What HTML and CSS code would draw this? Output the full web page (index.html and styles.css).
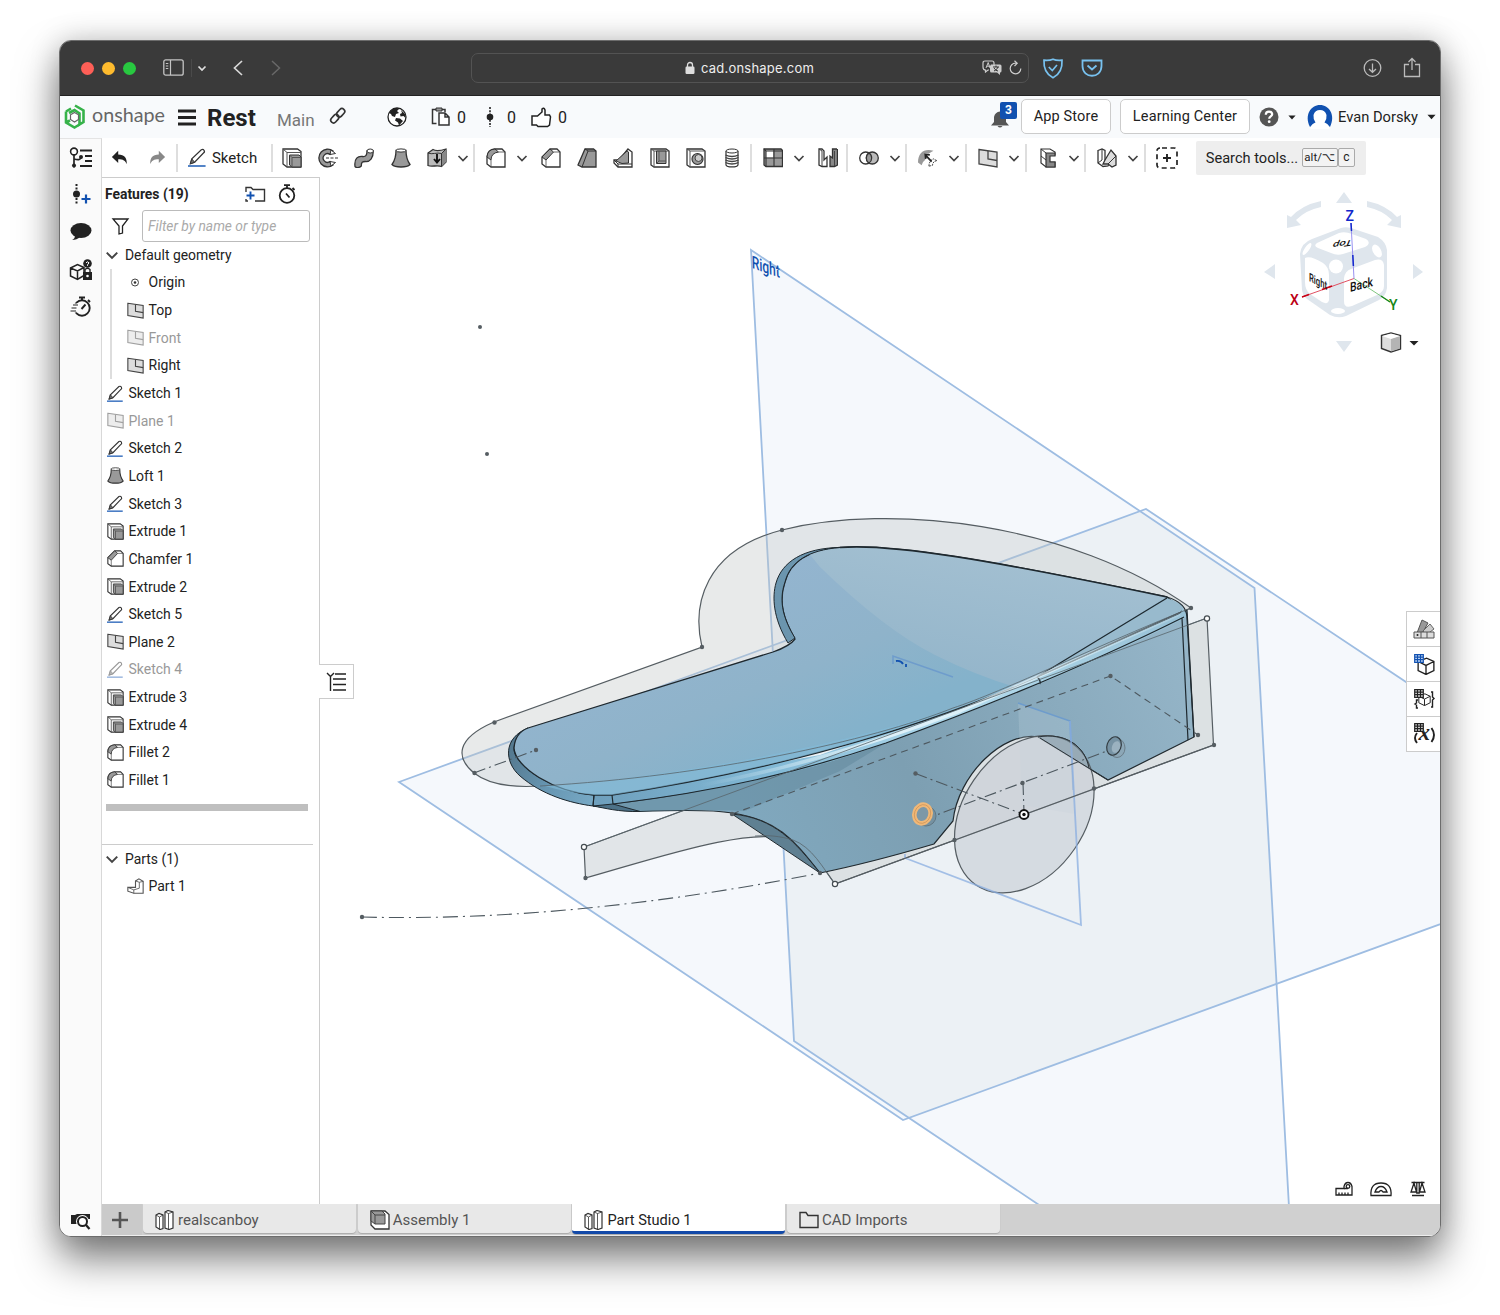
FILE: index.html
```html
<!DOCTYPE html>
<html lang="en">
<head>
<meta charset="utf-8">
<title>Rest | Part Studio 1</title>
<link rel="stylesheet" href="styles.css">
</head>
<body>
<svg class="sprite" aria-hidden="true">
  <symbol id="chev" viewBox="0 0 12 12"><path d="M1.500 4 6 8.500 10.500 4" fill="none" stroke="currentColor" stroke-width="1.700"/></symbol>
  <symbol id="caret" viewBox="0 0 10 6"><path d="M.5.5h9L5 5.500z" fill="currentColor"/></symbol>
  <symbol id="pencil" viewBox="0 0 20 20"><path d="M2.500 16.500 4 11.500 14 1.800q2-.8 3 .8t-1 2.900L7 15z" fill="#fff" stroke="#333" stroke-width="1.300"/><path d="M4 11.500 7 15l-4.500 1.500z" fill="#777" stroke="#333"/><path d="M0 19h18.500" stroke="#1b5bb5" stroke-width="1.500"/></symbol>
  <symbol id="extrude" viewBox="0 0 20 20"><path d="M1 1h14.500L19 3.500V19H5L1 16z" fill="#fff" stroke="#333" stroke-width="1.300"/><path d="M1 1l4 3.500V19M5 4.500h14" fill="none" stroke="#555"/><path d="M7.500 7H17l2 2v10H10l-2.500-2z" fill="#999" stroke="#333"/><path d="M7.500 7 10 9.500V19M10 9.500h9" fill="none" stroke="#555"/></symbol>
  <symbol id="revolve" viewBox="0 0 20 20"><path d="M15 3A8.800 8.800 0 1 0 15 17L12 13.500a4.300 4.300 0 1 1 0-7z" fill="#999" stroke="#333" stroke-width="1.300"/><path d="M12 6.500l1-4.500 4.500 3.500zM12 13.500l1 4.500 4.500-3.500z" fill="#fff" stroke="#333"/><path d="M8 10h12" stroke="#333" stroke-width="1.200" stroke-dasharray="3 1.500"/></symbol>
  <symbol id="sweep" viewBox="0 0 20 20"><path d="M1 18.500C0 10 4 8 8.500 8.500 12 9 13 7 13 3h6.300c0 7-3.300 11-8 10.500-3 0-4 .5-4 4.500-2 2-5 2-6.300.5z" fill="#999" stroke="#333" stroke-width="1.300"/><ellipse cx="16.200" cy="3" rx="3.200" ry="2" fill="#fff" stroke="#333"/></symbol>
  <symbol id="loft" viewBox="0 0 20 20"><path d="M5 2.500C5 8 3.500 13 1 16.500c3 3.300 15 3.300 18 0C16.500 13 15 8 15 2.500z" fill="#999" stroke="#333" stroke-width="1.300"/><ellipse cx="10" cy="2.500" rx="5" ry="1.600" fill="#fff" stroke="#333"/></symbol>
  <symbol id="thicken" viewBox="0 0 20 20"><path d="M1 5 6 1.500c3 2 8 1 13-.5v13l-4.500 4.500c-5-2-9 1-13.500-1z" fill="#bbb" stroke="#333" stroke-width="1.300"/><path d="M14.500 5.500 19 1v13l-4.500 4.500z" fill="#888"/><path d="M1 5c4 2 9-1 13.500.5L19 1M14.500 5.500V18" fill="none" stroke="#333"/><path d="M10 6v8M7 11l3 3.500L13 11" fill="none" stroke="#111" stroke-width="1.900"/></symbol>
  <symbol id="fillet" viewBox="0 0 20 20"><path d="M1 16V9Q1.500 1.500 9 1h7l3 3v15H5z" fill="#fff" stroke="#333" stroke-width="1.300"/><path d="M1 9Q1.500 1.500 9 1l3.500 3Q5 5 5 12z" fill="#999" stroke="#333"/><path d="M5 12v7M12.500 4H19" stroke="#444" stroke-width=".8" fill="none"/></symbol>
  <symbol id="chamfer" viewBox="0 0 20 20"><path d="M1 16V9l8-8h7l3 3v15H5z" fill="#fff" stroke="#333" stroke-width="1.300"/><path d="M1 9l8-8 3.500 3L5 12z" fill="#999" stroke="#333"/><path d="M5 12v7M12.500 4H19" stroke="#444" stroke-width=".8" fill="none"/></symbol>
  <symbol id="draft" viewBox="0 0 20 20"><path d="M8 1h8.500L19 3v16H5l-4-2z" fill="#999" stroke="#333" stroke-width="1.300"/><path d="M8 1l3 2h8M11 3 5 19" fill="none" stroke="#333"/></symbol>
  <symbol id="rib" viewBox="0 0 20 20"><path d="M15 1l4 3v15H5L1 15v-3h5z" fill="#fff" stroke="#333" stroke-width="1.300"/><path d="M3 13 14 3l1.500 1v11L9 15.500z" fill="#999" stroke="#333"/><path d="M1 12l4 4h14M5 16v3" fill="none" stroke="#333"/></symbol>
  <symbol id="shell" viewBox="0 0 20 20"><path d="M1 1h15l3 2v16H4l-3-2z" fill="#fff" stroke="#333" stroke-width="1.300"/><path d="M1 1l3 2h15M4 3v16" fill="none" stroke="#555"/><path d="M6.500 3v12.500h9.500V3z" fill="#999" stroke="#333"/><path d="M9 3v10h7M6.500 15.500 9 13" stroke="#555" fill="none"/></symbol>
  <symbol id="hole" viewBox="0 0 20 20"><path d="M1 1h15l3 2v16H4l-3-2z" fill="#fff" stroke="#333" stroke-width="1.300"/><path d="M1 1l3 2h15M4 3v16" fill="none" stroke="#555"/><circle cx="11.500" cy="11" r="5.500" fill="#999" stroke="#333" stroke-width="1.200"/><circle cx="12.500" cy="10" r="3.500" fill="#ccc" stroke="#444"/></symbol>
  <symbol id="thread" viewBox="0 0 20 20"><path d="M4 3v14c1 2.600 11 2.600 12 0V3" fill="#fff" stroke="#333" stroke-width="1.200"/><ellipse cx="10" cy="3" rx="6" ry="2" fill="#fff" stroke="#333"/><path d="M3.500 7q6.500 3 13 0M3.500 9.500q6.500 3 13 0M3.500 12q6.500 3 13 0M3.500 14.500q6.500 3 13 0" stroke="#444" stroke-width="1.300" fill="none"/></symbol>
  <symbol id="pattern" viewBox="0 0 20 20"><path d="M1 1h17l1.500 1.500v16H3L1 17z" fill="#999" stroke="#333" stroke-width="1.300"/><path d="M3 2.500h7v7H3z" fill="#fff"/><path d="M1 1l2 2h16M3 3v16M11 1v18M1 10h18.500" stroke="#333" fill="none" stroke-width="1.100"/></symbol>
  <symbol id="mirror" viewBox="0 0 20 20"><path d="M1 1h3l2 2v9l3-3v9.500H4L1 17z" fill="#fff" stroke="#333" stroke-width="1.300"/><path d="M1 1l3 2v15.500" stroke="#444" fill="none"/><path d="M19 1h-4.500v9l-2.500-2v10.500h4.500l3-1.500V1" fill="#888" stroke="#333" stroke-width="1.300"/><path d="M16.500 3v15" stroke="#444" fill="none"/></symbol>
  <symbol id="boolean" viewBox="0 0 20 20"><circle cx="6.700" cy="10" r="6" fill="#fff" stroke="#333" stroke-width="1.300"/><circle cx="13.300" cy="10" r="6" fill="#bbb" stroke="#333" stroke-width="1.300"/><path d="M10 5a6 6 0 0 1 0 10 6 6 0 0 1 0-10" fill="#999" stroke="#333" stroke-width="1.200"/></symbol>
  <symbol id="split" viewBox="0 0 22 20"><path d="M0 15C0 4 7-1 17 2l-5 3H8v7q-3 2-4 6z" fill="#999"/><path d="M12 19c0-4 2-7 5-8l4 2c-3 0-5 2-5 5z" fill="#fff" stroke="#333" stroke-dasharray="2 1"/><path d="M15 14 8 6.500M13 6.500l-5-.5.5 5" stroke="#222" stroke-width="1.900" fill="none"/></symbol>
  <symbol id="plane" viewBox="0 0 20 20"><path d="M1 1.500 19 4v15L1 16z" fill="#ddd" stroke="#444" stroke-width="1.300"/><path d="M10 3v8l9 1.500" fill="none" stroke="#444" stroke-width="1.300"/></symbol>
  <symbol id="bracket" viewBox="0 0 20 20"><path d="M3 1h9l5 3v3h-6v7h6v5H8L3 15z" fill="#fff" stroke="#333" stroke-width="1.200"/><path d="M8 5h9v3h-5v6h5v5H8z" fill="#888" stroke="#333" stroke-width="1.200"/><path d="M3 1l5 4M3 8l5 4" stroke="#333"/></symbol>
  <symbol id="sheet" viewBox="0 0 20 20"><path d="M1 2.500 5 1l3 1.500V12h6l-3 6-5 .5L1 15z" fill="#fff" stroke="#333" stroke-width="1.300"/><path d="M8 12 14 2l5 6v9l-4 2-4-3H6l2-4" fill="#ddd" stroke="#333" stroke-width="1.300"/><path d="M5 1v11l-4 3M11 16l8-8" fill="none" stroke="#333"/></symbol>
  <symbol id="undo" viewBox="0 0 20 20"><path d="M8 2v4c7 0 10 4 9.500 11-1.500-4-4-5.500-9.500-5.500v4L1 8.800z" fill="currentColor"/></symbol>
  <symbol id="addtool" viewBox="0 0 22 22"><rect x="1" y="1" width="20" height="20" rx="3" fill="none" stroke="#222" stroke-width="1.700" stroke-dasharray="5 3.500" stroke-dashoffset="-2"/><path d="M11 7v8M7 11h8" stroke="#222" stroke-width="1.900"/></symbol>
  <symbol id="studio" viewBox="0 0 20 20"><path d="M1 5 4 3.500 8 5v13.500L5 19.500 1 17zM10 2l3-1.500L18 2v16l-4 1.500L10 18z" fill="#fff" stroke="#333" stroke-width="1.200"/><path d="M1 5l3.500 2L8 5M4.500 7v12.500M10 2l3.500 1.500L18 2M13.500 3.500v16" stroke="#333" stroke-width=".8" fill="none"/></symbol>
  <symbol id="assembly" viewBox="0 0 20 20"><path d="M1 1h14l4 3.500V19H5L1 15z" fill="#fff" stroke="#333" stroke-width="1.300"/><path d="M1 1h11l3 3v10H5l-4-3z" fill="#999" stroke="#444"/><path d="M1 1l4 4h10M5 5v9" stroke="#444" fill="none"/></symbol>
  <symbol id="folder" viewBox="0 0 20 20"><path d="M1 2.500h6l2 3h10v12H1z" fill="none" stroke="#333" stroke-width="1.400"/></symbol>
  <symbol id="part" viewBox="0 0 20 20"><path d="M10 3.500 14 1l5 3v14H8l-7-2.500V11h9z" fill="#fff" stroke="#555" stroke-width="1.300"/><path d="M10 3.500 14.500 5 19 4M14.500 5v7L8 14l-7-3M8 14v4" fill="none" stroke="#555"/></symbol>
  <symbol id="grid" viewBox="0 0 10 9"><path d="M.7.700h8.600v7.600H.7zM3.500.7v7.600M6.500.7v7.600M.7 3.200h8.600M.7 5.700h8.600" fill="none" stroke="currentColor" stroke-width="1.200"/></symbol>
  <symbol id="cube" viewBox="0 0 16 16"><path d="M1 4l7.500-3L15 4v8l-7 3.500L1 12zM1 4l7 3.500L15 4M8 7.500v8" fill="none" stroke="#222" stroke-width="1.200"/></symbol>
</svg>

<div class="window">
  <div class="titlebar">
    <div class="lights"><i class="red"></i><i class="yellow"></i><i class="green"></i></div>
    <svg class="t-side" width="21" height="17"><rect x=".8" y=".8" width="19.400" height="15.400" rx="2" fill="none" stroke="#c4c4c4" stroke-width="1.300"/><path d="M7.500 1v15M2.800 4.500h2.500M2.800 7h2.500M2.800 9.500h2.500" stroke="#c4c4c4" stroke-width="1.200"/></svg>
    <span class="t-div"></span>
    <svg class="t-chev" width="10" height="7"><path d="M1.500 1.500 5 5l3.500-3.500" fill="none" stroke="#e0e0e0" stroke-width="1.700"/></svg>
    <svg class="t-back" width="10" height="16"><path d="M9 1 1.500 8 9 15" fill="none" stroke="#d8d8d8" stroke-width="1.700"/></svg>
    <svg class="t-fwd" width="10" height="16"><path d="M1 1l7.500 7L1 15" fill="none" stroke="#686868" stroke-width="1.500"/></svg>
    <div class="url">
      <svg width="10" height="14"><rect x=".5" y="5.500" width="9" height="7.500" rx="1.200" fill="#ddd"/><path d="M2.500 6V4a2.500 2.500 0 0 1 5 0v2" fill="none" stroke="#ddd" stroke-width="1.300"/></svg>
      <span>cad.onshape.com</span>
      <div class="url-end">
        <svg width="20" height="16"><path d="M3 1h7q2 0 2 2v4M7 10H6l-2.500 2V10Q1 10 1 7V3q0-2 2-2" fill="none" stroke="#ccc" stroke-width="1.200"/><path d="M4 8l2.200-5.500L8 8M4.800 6.200h3" stroke="#ccc" fill="none"/><path d="M9 4.500h9q1.500 0 1.500 1.500v5q0 1.500-1.500 1.500V15l-3-2.500H9.500Q8 12.500 8 11V6z" fill="#ccc"/><path d="M11 7h6M14 5.500V7M12 11q3-1 4-4M12 8q2 3 4 3" stroke="#333" fill="none"/></svg>
        <svg width="13" height="16"><path d="M11.800 8.500a5.300 5.300 0 1 1-5.300-5.300H8M5.500.7 8.200 3.300 5.500 6" fill="none" stroke="#ccc" stroke-width="1.200"/></svg>
      </div>
    </div>
    <svg class="t-shield" width="22" height="21"><path d="M11 1.200c3 1.300 6 1.300 9 1 .5 8-2 14-9 17.500C4 16.200 1.500 10.200 2 2.200c3 .3 6 .3 9-1z" fill="none" stroke="#78c1ee" stroke-width="1.700"/><path d="M6.800 9l3.500 3.500L15 7" fill="none" stroke="#78c1ee" stroke-width="1.700"/></svg>
    <svg class="t-pocket" width="22" height="18"><path d="M1.500 1.500h19V7c0 13-19 13-19 0z" fill="none" stroke="#78c1ee" stroke-width="1.800"/><path d="M6.500 6.500l4.500 4 4.500-4" fill="none" stroke="#78c1ee" stroke-width="1.800"/></svg>
    <span class="grow"></span>
    <svg class="t-down" width="19" height="19"><circle cx="9.500" cy="9" r="8.300" fill="none" stroke="#bbb" stroke-width="1.300"/><path d="M9.500 4.500V13M6 10l3.500 3.300L13 10" fill="none" stroke="#bbb" stroke-width="1.300"/></svg>
    <svg class="t-share" width="18" height="21"><path d="M6 6.500H1.500v12h15v-12H12M9 12V.5M5.500 4 9 .5 12.500 4" fill="none" stroke="#bbb" stroke-width="1.300"/></svg>
  </div>

  <header class="header">
    <svg class="logo" width="102" height="26" viewBox="0 0 102 26"><path d="M11 1.500 19.500 6.500V18l-4 2.500V9.500L10.500 6 5 9" fill="none" stroke="#36b24a" stroke-width="2.600"/><path d="M2 7.500v11l8.500 5 5-3M2 7.500 7 4.500M2 18.500l4-2" fill="none" stroke="#36b24a" stroke-width="2.600"/><path d="M10.500 8.500l4 2.300v4.700l-4 2.500-4-2.500v-4.700z" fill="#fff" stroke="#666" stroke-width="1.200"/><text x="28" y="17.500" font-family="Lato" font-weight="400" font-size="19" fill="#666" textLength="73" lengthAdjust="spacingAndGlyphs">onshape</text></svg>
    <svg class="burger" width="18" height="17"><path d="M0 2h18M0 8.500h18M0 15h18" stroke="#222" stroke-width="2.800"/></svg>
    <span class="doc">Rest</span><span class="branch">Main</span>
    <svg class="link" width="18" height="18"><g fill="none" stroke="#333" stroke-width="1.600"><rect x="-4.500" y="-2.800" width="9.500" height="5.600" rx="2.800" transform="translate(11.500 6) rotate(-48)"/><rect x="-5" y="-2.800" width="9.500" height="5.600" rx="2.800" transform="translate(6 11.500) rotate(-48)"/></g></svg>
    <svg class="globe" width="20" height="20"><circle cx="10" cy="10" r="9" fill="#fff" stroke="#222" stroke-width="1.300"/><path d="M2 6q3-5 8-5l2 1-2 2 2 2-3 1-1 3-3-1-1-2zM14 3l4 4 .5 4-2-2-3 .5L13 7l2-1zM9 11l4 .5 3 2.500-4 4.500-1-3-3-2z" fill="#222"/></svg>
    <svg class="copy" width="20" height="20"><path d="M5.500 16.500h-4v-14h4M11 2.500h3V5" fill="none" stroke="#333" stroke-width="1.500"/><path d="M5 1h6v3H5z" fill="#999" stroke="#333"/><path d="M8 6h6l4 4v8H8zM14 6v4h4" fill="#fff" stroke="#333" stroke-width="1.500"/></svg><b class="n n1">0</b>
    <svg class="ver" width="8" height="20"><path d="M4 0v20" stroke="#222" stroke-width="1.600" stroke-dasharray="2 1.200"/><circle cx="4" cy="10" r="3.300" fill="#222"/></svg><b class="n n2">0</b>
    <svg class="thumb" width="20" height="21"><path d="M1 9h5.500L11 5V2q2-2 3 1v5h4.500l1 2-1 8-2 1.500H7L5.500 18H1z" fill="#fff" stroke="#222" stroke-width="1.500"/></svg><b class="n n3">0</b>
    <span class="grow"></span>
    <div class="bell"><svg width="20" height="18"><path d="M1 15.500 4 12V7q1-5 6-5.500 5 .5 6 5.500v5l3 3.500zM7.500 16h5q-2.500 3-5 0z" fill="#555"/></svg><em>3</em></div>
    <span class="btn app">App Store</span><span class="btn learn">Learning Center</span>
    <svg class="help" width="20" height="20"><circle cx="10" cy="10" r="9.500" fill="#555"/><path d="M6.800 7.800q0-3.200 3.200-3.200t3.200 2.700c0 2.200-3 2.200-3 4.500" fill="none" stroke="#fff" stroke-width="2.200"/><circle cx="10.200" cy="14.700" r="1.400" fill="#fff"/></svg>
    <svg class="c1" width="8" height="5"><use href="#caret"/></svg>
    <svg class="avatar" width="26" height="25"><path d="M3 22C-3 10 4 0 13 0s16 10 10 22l-3-3H6z" fill="#1151b0"/><path d="M8.500 17.500Q4 19 3.500 24h19q-.5-5-5-6.500Q20 14 19.500 10 18 5 13 5t-6.500 5Q6 14 8.500 17.500z" fill="#fff"/></svg>
    <span class="user">Evan Dorsky</span>
    <svg class="c2" width="9" height="6"><use href="#caret"/></svg>
  </header>

  <div class="main">
    <nav class="rail">
      <svg width="24" height="22"><path d="M5 7.500v13M5 12q7 2 7-2" fill="none" stroke="#222" stroke-width="1.700"/><circle cx="5" cy="4.500" r="3.400" fill="#fff" stroke="#222" stroke-width="1.600"/><circle cx="5" cy="18.500" r="2" fill="#222"/><circle cx="12" cy="10" r="2" fill="#222"/><path d="M11 3.500h12M16 9h7M16 14h7M11 19h12" stroke="#222" stroke-width="2"/></svg>
      <svg width="24" height="22"><path d="M7.500 0v21" stroke="#222" stroke-width="2" stroke-dasharray="2 1.500"/><circle cx="7.500" cy="10" r="3.500" fill="#222"/><path d="M17 10.500v9M12.500 15h9" stroke="#1151b0" stroke-width="2.200"/></svg>
      <svg width="24" height="22"><ellipse cx="12" cy="9.500" rx="10.500" ry="7.500" fill="#222"/><path d="M6 14.500q0 3-3 4.500 5 0 8-3z" fill="#222"/></svg>
      <svg width="24" height="22"><path d="M1.500 9l7-3.500L15 8.500v8l-6.500 4-7-3.500zM1.500 9l7 3 6.500-3.500M8.500 12v8" fill="none" stroke="#222" stroke-width="1.500"/><circle cx="18.500" cy="4.500" r="4.300" fill="#222"/><path d="M17 3.800q1.500-2 3 0l-1.500 2v1" stroke="#fff" fill="none"/><path d="M14 13h9v8h-9z" fill="#222"/><path d="M16 13v-2.500q2.500-2.500 5 0V13" stroke="#222" stroke-width="1.400" fill="none"/><circle cx="18.500" cy="17" r="1.300" fill="#fff"/></svg>
      <svg width="24" height="22"><circle cx="13" cy="12" r="7.700" fill="none" stroke="#222" stroke-width="1.900"/><path d="M10 1.500h6M13 2v2.500M19 4l2 2M12.500 13l4-4.500" stroke="#222" stroke-width="1.900"/><path d="M4 9h6M2.500 12h6M1.500 15h6" stroke="#fff" stroke-width="3"/><path d="M4 9h5M2.500 12h5M1.500 15h5.500" stroke="#222" stroke-width="1.200"/></svg>
      <span class="grow"></span>
      <svg class="rail-find" width="22" height="20"><path d="M1 4h4l2-1h13v5H7v5H1z" fill="#222"/><circle cx="12.500" cy="10.500" r="6.500" fill="#fff"/><circle cx="12.500" cy="10.500" r="4.500" fill="#fff" stroke="#222" stroke-width="2"/><path d="M16 14l3.500 4" stroke="#222" stroke-width="2.300"/></svg>
    </nav>

    <div class="content">
      <div class="toolbar">
        <svg class="undo" width="18" height="18"><use href="#undo"/></svg>
        <svg class="redo" width="18" height="18"><use href="#undo"/></svg>
        <i class="sep first"></i>
        <svg class="pen" width="19" height="19"><use href="#pencil"/></svg><span class="sketch">Sketch</span>
        <i class="sep second"></i>
        <span class="tool"><svg><use href="#extrude"/></svg></span><span class="tool"><svg><use href="#revolve"/></svg></span><span class="tool"><svg><use href="#sweep"/></svg></span><span class="tool"><svg><use href="#loft"/></svg></span><span class="tool"><svg><use href="#thicken"/></svg></span><span class="more"><svg><use href="#chev"/></svg></span>
        <i class="sep"></i>
        <span class="tool"><svg><use href="#fillet"/></svg></span><span class="more"><svg><use href="#chev"/></svg></span><span class="tool"><svg><use href="#chamfer"/></svg></span><span class="tool"><svg><use href="#draft"/></svg></span><span class="tool"><svg><use href="#rib"/></svg></span><span class="tool"><svg><use href="#shell"/></svg></span><span class="tool"><svg><use href="#hole"/></svg></span><span class="tool"><svg><use href="#thread"/></svg></span>
        <i class="sep"></i>
        <span class="tool"><svg><use href="#pattern"/></svg></span><span class="more"><svg><use href="#chev"/></svg></span><span class="tool"><svg><use href="#mirror"/></svg></span>
        <i class="sep"></i>
        <span class="tool"><svg><use href="#boolean"/></svg></span><span class="more"><svg><use href="#chev"/></svg></span>
        <i class="sep"></i>
        <span class="tool"><svg><use href="#split"/></svg></span><span class="more"><svg><use href="#chev"/></svg></span>
        <i class="sep"></i>
        <span class="tool"><svg><use href="#plane"/></svg></span><span class="more"><svg><use href="#chev"/></svg></span>
        <i class="sep"></i>
        <span class="tool"><svg><use href="#bracket"/></svg></span><span class="more"><svg><use href="#chev"/></svg></span>
        <i class="sep"></i>
        <span class="tool"><svg><use href="#sheet"/></svg></span><span class="more"><svg><use href="#chev"/></svg></span>
        <i class="sep"></i>
        <span class="tool wide"><svg><use href="#addtool"/></svg></span>
        <div class="search"><span>Search tools...</span><kbd class="k1">alt/⌥</kbd><kbd class="k2">c</kbd></div>
      </div>

      <div class="work">
        <aside class="panel">
          <div class="panel-head"><strong>Features (19)</strong>
            <svg class="newf" width="21" height="17"><path d="M1 6V1.500h5l2 2h11.500V15H10M1 13v2h2" fill="none" stroke="#333" stroke-width="1.400"/><path d="M5.500 5.500v8M1.500 9.500h8" stroke="#1151b0" stroke-width="1.900"/></svg>
            <svg class="watch" width="18" height="20"><circle cx="9" cy="11.500" r="7.300" fill="none" stroke="#222" stroke-width="1.800"/><path d="M6 1.200h6M9 1.500V4M14.500 4l2 2M8 9.500l3.500 4" stroke="#222" stroke-width="1.800"/></svg>
          </div>
          <div class="filter"><svg width="17" height="17"><path d="M1 2h15l-5.500 7v7L7 17V9z" fill="none" stroke="#222" stroke-width="1.300"/></svg><div class="field">Filter by name or type</div></div>
          <div class="tree">
            <div class="row group"><svg class="tw"><use href="#chev"/></svg>Default geometry</div>
            <div class="nest">
              <div class="row"><svg class="ic"><circle cx="8" cy="8.500" r="3.500" fill="none" stroke="#444"/><circle cx="8" cy="8.500" r="1.300" fill="#333"/></svg>Origin</div>
              <div class="row"><svg class="ic"><use href="#plane"/></svg>Top</div>
              <div class="row off"><svg class="ic"><use href="#plane"/></svg>Front</div>
              <div class="row"><svg class="ic"><use href="#plane"/></svg>Right</div>
            </div>
            <div class="row"><svg class="ic"><use href="#pencil"/></svg>Sketch 1</div>
            <div class="row off"><svg class="ic"><use href="#plane"/></svg>Plane 1</div>
            <div class="row"><svg class="ic"><use href="#pencil"/></svg>Sketch 2</div>
            <div class="row"><svg class="ic"><use href="#loft"/></svg>Loft 1</div>
            <div class="row"><svg class="ic"><use href="#pencil"/></svg>Sketch 3</div>
            <div class="row"><svg class="ic"><use href="#extrude"/></svg>Extrude 1</div>
            <div class="row"><svg class="ic"><use href="#chamfer"/></svg>Chamfer 1</div>
            <div class="row"><svg class="ic"><use href="#extrude"/></svg>Extrude 2</div>
            <div class="row"><svg class="ic"><use href="#pencil"/></svg>Sketch 5</div>
            <div class="row"><svg class="ic"><use href="#plane"/></svg>Plane 2</div>
            <div class="row off"><svg class="ic"><use href="#pencil"/></svg>Sketch 4</div>
            <div class="row"><svg class="ic"><use href="#extrude"/></svg>Extrude 3</div>
            <div class="row"><svg class="ic"><use href="#extrude"/></svg>Extrude 4</div>
            <div class="row"><svg class="ic"><use href="#fillet"/></svg>Fillet 2</div>
            <div class="row"><svg class="ic"><use href="#fillet"/></svg>Fillet 1</div>
          </div>
          <div class="rollback"></div>
          <div class="parts">
            <div class="row group"><svg class="tw"><use href="#chev"/></svg>Parts (1)</div>
            <div class="row sub"><svg class="ic"><use href="#part"/></svg>Part 1</div>
          </div>
        </aside>

        <div class="canvas">
          <svg class="scene" viewBox="320 178 1120 1026" width="1120" height="1026">
            <defs>
              <linearGradient id="gTop" gradientUnits="userSpaceOnUse" x1="620" y1="620" x2="700" y2="800"><stop offset="0" stop-color="#94b5d0"/><stop offset=".6" stop-color="#8fb3ca"/><stop offset="1" stop-color="#84b2cb"/></linearGradient>
              <linearGradient id="gWing" gradientUnits="userSpaceOnUse" x1="950" y1="550" x2="920" y2="720"><stop offset="0" stop-color="#a2bfd1"/><stop offset="1" stop-color="#8fb2c8"/></linearGradient>
              <linearGradient id="gSide" gradientUnits="userSpaceOnUse" x1="760" y1="850" x2="1190" y2="650"><stop offset="0" stop-color="#80a8be"/><stop offset=".35" stop-color="#7d9fb2"/><stop offset="1" stop-color="#95b5c8"/></linearGradient>
              <linearGradient id="gRim" gradientUnits="userSpaceOnUse" x1="600" y1="0" x2="1180" y2="0"><stop offset="0" stop-color="#6fa0bd"/><stop offset=".3" stop-color="#82b9d6"/><stop offset=".62" stop-color="#b4dcee"/><stop offset="1" stop-color="#98c1d6"/></linearGradient>
              <linearGradient id="gShine" gradientUnits="userSpaceOnUse" x1="700" y1="0" x2="1180" y2="0"><stop offset="0" stop-color="#e6f5fb" stop-opacity="0"/><stop offset=".4" stop-color="#e6f5fb" stop-opacity=".9"/><stop offset=".7" stop-color="#e6f5fb" stop-opacity=".7"/><stop offset="1" stop-color="#e6f5fb" stop-opacity=".2"/></linearGradient>
              <linearGradient id="gEdge" gradientUnits="userSpaceOnUse" x1="508" y1="750" x2="600" y2="800"><stop offset="0" stop-color="#54788e"/><stop offset=".5" stop-color="#6796b2"/><stop offset="1" stop-color="#79abc7"/></linearGradient>
              <clipPath id="rightPlane"><path d="M751 250 1254.500 588 1290 1225H1069L794 1041z"/></clipPath>
              <clipPath id="deck"><path d="M528 728 773 652Q790 646 795 639C784 620 778 602 785 582 790 562 808 550 840 547.500 890 543 990 560 1167 597L1037 677C900 738 740 776 612 795z"/></clipPath>
            </defs>
            <path d="M751 250 1254.500 588 1290 1225H1069L794 1041zM399 782 1146 509 1460 718V917L903 1120z" fill="#f5f8fc"/>
            <path d="M399 782 1146 509 1460 718V917L903 1120z" fill="#ecf1f5" clip-path="url(#rightPlane)"/>
            <g fill="none" stroke="#9ebde2" stroke-width="1.800">
              <path d="M751 250 1254.500 588 1290 1225H1069L794 1041z"/>
              <path d="M399 782 1146 509 1460 718V917L903 1120z"/>
            </g>
            <g fill="#bfc5c6" fill-opacity=".36" stroke="#555d62" stroke-width="1.200">
              <path d="M474 773C456 758 455 739 494 722L702 647C692 605 704 550 782 530 890 503 1070 522 1191 608L1037 677C900 740 700 775 540 786 510 788 488 784 474 773z"/>
              <path d="M584 847 1207 618 1213.500 745 835 884C823 868 812 847 793 840 750 826 660 857 585.500 878z"/>
            </g>
            <path d="M593 806 640 811.500C680 810 715 810 732 813 780 820 795 842 820 873 860 865 900 854 934 844L953 821C958 775 1003 731 1038 737L1108 780 1188 740 1194 737 1187 610C1100 655 1000 702 886 742 790 776 680 797 593 806z" fill="url(#gSide)" stroke="#20292e" stroke-width="1.200"/>
            <path d="M613 804C720 791 800 772 886 743L840 771 745 811C720 809 680 811 640 811.500z" fill="#547a90" fill-opacity=".35"/>
            <path d="M732 814C775 818 795 842 820 873z" fill="#5f8092" stroke="#222b30" stroke-width="1"/>
            <path d="M1038 737C1065 732 1085 746 1089 768z" fill="#708b9b" stroke="#333"/>
            <path d="M528 728C503 738 504 762 520 776 542 795 570 803 593 806L615 809 640 812 613 804C760 786 840 760 886 743 1000 702 1110 656 1187 617L1182 605 1167 597 1036 677 820 755 600 795 524 769z" fill="url(#gRim)"/>
            <path d="M528 728C503 738 504 762 520 776 542 795 570 803 593 806L594 795C550 791 515 765 514 750 514 740 519 733 528 728z" fill="url(#gEdge)" stroke="#1e282e"/>
            <path d="M593 806 613 804 640 811.500C618 812 605 808 593 806z" fill="#4d7288" stroke="#1e282e"/>
            <path d="M528 728 773 652Q790 646 795 639C784 620 778 602 785 582 790 562 808 550 840 547.500 890 543 990 560 1167 597L1180 608Q1183 611 1178 614L1037 677C900 738 740 776 612 795H594C553 792 515 767 514 748Q515 733 528 728z" fill="url(#gTop)" stroke="#1e282e" stroke-width="1.300"/>
            <path d="M790 530 820 567Q885 630 935 655 975 675 1015 687L1045 676 1175 600V530z" fill="url(#gWing)" clip-path="url(#deck)"/>
            <path d="M1037 677 1167 598 1181 604Q1184 609 1180 613z" fill="#98bacd"/>
            <path d="M840 547.500C890 543 990 560 1167 597" fill="none" stroke="#1e282e" stroke-width="1.700"/>
            <path d="M788 643C773 618 772 597 776 583 782 562 803 548 840 547.500 808 550 790 562 785 582 778 602 784 620 795 638z" fill="#6b95ae" stroke="#1e282e"/>
            <path d="M545 786C690 776 860 740 953 708L937 715C850 747 740 775 612 795H594Q565 792 545 786z" fill="#82bbd8" fill-opacity=".6"/>
            <path d="M613 804C720 791 800 772 886 743 990 705 1090 664 1184 617M594 795 593 806M612 795 613 804M1037 677 1167 598M1037 677 1181 612M1037 677Q1041 680 1040 684M1167 597Q1187 603 1187 618M1182 618 1188 740M1187 618 1194 737" fill="none" stroke="#1e282e" stroke-width="1.200"/>
            <path d="M620 799C730 783 830 760 960 711L1180 614" fill="none" stroke="url(#gShine)" stroke-width="3.500"/>
            <path d="M540 786C710 776 870 741 953 708 1000 693 1110 640 1191 608M584 847 1207 618M835 884C823 868 812 847 793 840 780 836 768 835 755 836" fill="none" stroke="#59656c" stroke-opacity=".8"/>
            <path d="M1018 703 1070 721 1075 814 1022 805z" fill="#bed3df" fill-opacity=".25"/><path d="M1018 703 1070 721 1073 790M893 664V656L953 677" fill="none" stroke="#6e9ccc" stroke-width="1.500"/>
            <path d="M896 661q5-1 7 3M906 664v3" stroke="#1151b0" stroke-width="1.800" fill="none"/>
            <ellipse cx="1024.300" cy="814.300" rx="85.600" ry="61" transform="rotate(124.400 1024.300 814.300)" fill="#c9d0d7" fill-opacity=".67" stroke="#555d62" stroke-width="1.200"/>
            <path d="M1040 738 1108 780M1038 737C1065 732 1085 746 1089 768" stroke="#293238" fill="#7994a3" fill-opacity=".4"/>
            <path d="M1070 721 1081 925 905 858V854" fill="none" stroke="#89ade0" stroke-width="1.800" stroke-opacity=".75"/>
            <path d="M835 884 1213.500 745" stroke="#555d62" stroke-width="1.200"/>
            <g fill="none" stroke="#4d585f" stroke-width="1.100">
              <path d="M732 814 1110.500 676 1198 735" stroke-dasharray="7 5"/>
              <path d="M362 917C510 921 670 903 820 873" stroke-dasharray="15 5 2 5"/>
              <path d="M474 773 536 750M915.500 773.500 1024 814.500M923 820 1115 748M1023 783 1024 812" stroke-dasharray="12 4 2 4"/>
            </g>
            <ellipse cx="1117" cy="748" rx="8" ry="9.500" fill="#8ca7b7" stroke="#6b7e89"/><ellipse cx="1114" cy="746" rx="7" ry="9.500" transform="rotate(20 1114 746)" fill="#7793a4" stroke="#333c41" stroke-width="1.200"/><ellipse cx="1116" cy="747" rx="4" ry="6" transform="rotate(20 1116 747)" fill="#9bb2c0"/>
            <ellipse cx="926" cy="816" rx="10" ry="10" fill="#7592a2" stroke="#627783"/><ellipse cx="922.500" cy="814" rx="8" ry="9.500" transform="rotate(20 922.500 814)" fill="#7d98a7" stroke="#f0b878" stroke-width="4.600"/><ellipse cx="922.500" cy="814" rx="8" ry="9.500" transform="rotate(20 922.500 814)" fill="none" stroke="#c78d50" stroke-width=".6"/>
            <g fill="#555d62"><circle cx="480" cy="327" r="2"/><circle cx="487" cy="454" r="2"/><circle cx="494.500" cy="722.500" r="2.200"/><circle cx="474.500" cy="773" r="2.200"/><circle cx="536" cy="750" r="2.200"/><circle cx="702" cy="647" r="2.200"/><circle cx="782" cy="530" r="2.200"/><circle cx="1191" cy="608" r="2.200"/><circle cx="585.500" cy="878" r="2.200"/><circle cx="362" cy="917" r="2.200"/><circle cx="820" cy="873" r="2.200"/><circle cx="915.500" cy="773.500" r="2.200"/><circle cx="1022.500" cy="783" r="2.200"/><circle cx="1110.500" cy="676" r="2.200"/><circle cx="1198" cy="735" r="2.200"/><circle cx="1214" cy="745" r="2.200"/><circle cx="1094" cy="788.500" r="2.200"/><circle cx="954.500" cy="840" r="2.200"/><circle cx="732" cy="814" r="2.200"/></g>
            <g fill="#fff" stroke="#444c51" stroke-width="1.200"><circle cx="584" cy="847" r="2.600"/><circle cx="835" cy="884" r="2.600"/><circle cx="1207" cy="618.500" r="2.600"/></g>
            <circle cx="1024" cy="814.500" r="4.500" fill="#fff" stroke="#111" stroke-width="1.900"/><circle cx="1024" cy="814.500" r="1.700" fill="#111"/>
            <text transform="matrix(.82 .29 .03 1.100 752 268)" font-family="Roboto" font-size="16" font-weight="500" fill="#1151b0" textLength="34" lengthAdjust="spacingAndGlyphs">Right</text>

            <g fill="#dfe6ed">
              <path d="M1336 203h16l-8-11zM1336 341h16l-8 11zM1264 272l11-8v15zM1423 272l-10-8v15zM1287 228v-13l4 2q11-12 30-16v6q-15 3-25 13l5 5zM1401 228v-13l-4 2q-11-12-30-16v6q15 3 25 13l-5 5z"/>
              <path d="M1300 254Q1301 243 1312 239L1341 228Q1347 226 1354 229L1378 237Q1386 242 1387 250V288Q1386 296 1379 300L1346 316Q1338 319 1330 315L1307 299Q1303 296 1302 290z"/>
            </g>
            <g fill="#fff"><path d="M1317 243 1339 233Q1345 231 1352 234L1366 239Q1372 243 1365 247L1343 254Q1337 256 1331 253L1318 248Q1313 246 1317 243zM1305 258Q1310 255 1323 263 1329 267 1329 275V300Q1328 305 1322 302L1310 294Q1305 290 1305 282zM1344 278Q1345 271 1351 269L1375 260Q1383 258 1384 265V286Q1384 292 1377 295L1352 306Q1344 309 1344 301z"/><circle cx="1336" cy="266.500" r="7"/><ellipse cx="1377" cy="251" rx="4" ry="7" transform="rotate(-30 1377 251)"/><ellipse cx="1307" cy="249" rx="2.300" ry="7" transform="rotate(35 1307 249)"/><ellipse cx="1338" cy="311" rx="7" ry="3"/></g>
            <path d="M1354 278.500 1302 297" stroke="#e05062"/><path d="M1332 286l-10 3.500M1309 294.500 1302 297" stroke="#c80014" stroke-width="1.400"/><path d="M1354 278.500 1390 302" stroke="#7fc67f"/><path d="M1381 296l9 6" stroke="#168616" stroke-width="1.400"/><path d="M1354 278.500 1351 223" stroke="#9890f0"/><path d="M1351 223l.5 8M1352.800 255l.6 11" stroke="#1228cc" stroke-width="1.500"/>
            <g font-family="Roboto" font-weight="500"><text x="1345.500" y="221" font-size="14" fill="#1228cc">Z</text><text x="1290" y="305" font-size="14" fill="#bc0015">X</text><text x="1389" y="310" font-size="14" fill="#168616">Y</text>
            <text transform="matrix(.9 .45 0 1 1309 281)" font-size="12" fill="#111" textLength="20" lengthAdjust="spacingAndGlyphs">Right</text><text transform="matrix(.96 -.25 0 1 1350 292)" font-size="13" fill="#111" textLength="24" lengthAdjust="spacingAndGlyphs">Back</text><text transform="matrix(-1 .16 .3 -.75 1353 239.500)" font-size="11.500" fill="#111">Top</text></g>
            <path d="M1381.500 335.500 1391 333l9.500 2.500V349L1391 352l-9.500-3.500z" fill="#ddd" stroke="#333" stroke-width="1.400"/><path d="M1391 338.500l9-2.500v12.500l-9 3z" fill="#b4b4b4"/><path d="M1382 336l9 3 9-3-9-2.500z" fill="#fff"/><path d="M1409.500 341h9l-4.500 4.500z" fill="#222"/>
            <g fill="#fff" stroke="#222" stroke-width="1.300"><path d="M1336 1188.500h8v-2q1-4 4-4t4 4v8.500h-16z"/><circle cx="1348" cy="1186.500" r="1.800"/><path d="M1344 1188.500h4M1339 1195v-2.500M1342 1195v-2.500M1345 1195v-2.500M1348 1195v-2.500"/><path d="M1371 1195.500Q1370 1183 1381 1183T1391 1195.500z"/><path d="M1375 1192Q1377 1186.500 1381 1186.500T1387 1192h-4q-2-3-4 0z"/><path d="M1411.500 1182.500h13M1416.800 1182v11h2.400v-11M1412 1195.500h12M1414 1183l-3 9h5.500zM1422 1183l-2.500 9h5.500z"/></g>
          </svg>
          <div class="flyout"><svg width="21" height="20"><path d="M1 1l3.500 3.500L8 1M4.500 5v14M9 2h11M7 7h13M7 12.500h13M7 18h13" fill="none" stroke="#222" stroke-width="1.400"/></svg></div>
          <div class="side">
            <span><svg width="22" height="22"><path d="M4 15 9 2l6 3-5 9z" fill="#999" stroke="#555"/><path d="M10 13l7-7 4 5-8 6z" fill="#ccc" stroke="#666"/><path d="M1 14h20v6H1z" fill="#ddd" stroke="#555"/><path d="M8 14v6M14 14v6" stroke="#555"/><circle cx="4.500" cy="17" r="1" fill="#222"/></svg></span>
            <span><svg width="22" height="22"><use href="#cube" x="4" y="4" width="18" height="18"/><rect x="1" y="1" width="10" height="9" fill="#c9dcf7"/><use href="#grid" x="1" y="1" width="10" height="9" color="#1151b0"/></svg></span>
            <span><svg width="22" height="22"><use href="#cube" x="5" y="5" width="13" height="13"/><rect x="1" y="1" width="10" height="9" fill="#ddd"/><use href="#grid" x="1" y="1" width="10" height="9" color="#222"/><path d="M5 12H3.500v3L2 16l1.500 1v3H5M18 4h1.500v5L21 10.500 19.500 12v7H18" fill="none" stroke="#222" stroke-width="1.400"/></svg></span>
            <span><svg width="22" height="22"><text x="5.500" y="17" font-family="Liberation Serif" font-style="italic" font-weight="bold" font-size="23" fill="#222">x</text><path d="M4 10q-4 5 0 10M18.500 5q5 7 0 14" fill="none" stroke="#222" stroke-width="1.900"/><rect x="1" y="1" width="10" height="8" fill="#ddd"/><use href="#grid" x="1" y="0" width="10" height="9" color="#222"/></svg></span>
          </div>
        </div>
      </div>

      <footer class="tabs">
        <div class="plus"><svg width="16" height="16"><path d="M8 0v16M0 8h16" stroke="#555" stroke-width="2.600"/></svg></div>
        <div class="tab"><svg><use href="#studio"/></svg>realscanboy</div>
        <div class="tab"><svg><use href="#assembly"/></svg>Assembly 1</div>
        <div class="tab active"><svg><use href="#studio"/></svg>Part Studio 1</div>
        <div class="tab"><svg><use href="#folder"/></svg>CAD Imports</div>
      </footer>
    </div>
  </div>
</div>
</body>
</html>
```
FILE: styles.css
```css
* { box-sizing: border-box; }
html, body { height: 1315px; overflow: hidden; }
body { margin: 0; padding: 40px 59px; background: #fff; font-family: Roboto, "Liberation Sans", sans-serif; font-size: 14px; color: #222; }
svg { display: block; flex: none; overflow: visible; }
.sprite { position: absolute; width: 0; height: 0; }
.grow { flex: 1; }

.window { width: 1382px; height: 1197px; border: 1px solid #6c6c6c; border-radius: 12px; overflow: hidden; display: flex; flex-direction: column; background: #fff; box-shadow: 0 22px 40px rgba(0,0,0,.5), 0 0 30px rgba(0,0,0,.18); }

.titlebar { height: 55px; flex: none; background: #3a3a3a; border-bottom: 1px solid #222; display: flex; align-items: center; }
.lights { display: flex; gap: 8px; margin-left: 21px; width: 56px; }
.lights i { width: 13px; height: 13px; border-radius: 50%; }
.red { background: #fe5f57; } .yellow { background: #febb2e; } .green { background: #28c840; }
.t-side { margin-left: 26px; margin-top: -1px; }
.t-div { width: 1px; height: 18px; background: #4a4a4a; margin-left: 7px; }
.t-chev { margin-left: 5px; }
.t-back { margin-left: 26px; margin-top: -1px; }
.t-fwd { margin-left: 28px; margin-top: -1px; }
.url { width: 558px; height: 30px; margin-left: 190px; border: 1px solid #535353; border-radius: 7px; display: flex; align-items: center; padding-left: 213px; color: #eee; font-family: Inter, sans-serif; font-size: 13px; }
.url > span { margin-left: 6px; letter-spacing: .22px; }
.url-end { margin-left: auto; display: flex; gap: 7px; padding-right: 6px; }
.t-shield { margin-left: 13px; }
.t-pocket { margin-left: 17px; }
.t-down { margin-right: 21px; }
.t-share { margin-right: 19px; }

.header { height: 42px; flex: none; background: #f8fafc; display: flex; align-items: center; }
.logo { margin-left: 4px; }
.burger { margin-left: 12px; }
.doc { width: 58px; margin-left: 11px; font-size: 24px; font-weight: 700; padding-top: 1px; }
.branch { width: 38px; margin-left: 12px; font-size: 17px; color: #777; padding-top: 5px; }
.link { margin-left: 14px; margin-top: -2px; }
.globe { margin-left: 40px; }
.copy { margin-left: 24px; }
.n { font-weight: 400; font-size: 16px; width: 10px; }
.n1 { margin-left: 6px; } .ver { margin-left: 19px; } .n2 { margin-left: 13px; } .thumb { margin-left: 14px; } .n3 { margin-left: 7px; }
.bell { position: relative; width: 28px; height: 26px; padding-top: 6px; }
.bell em { position: absolute; left: 10px; top: -2px; width: 17px; height: 17px; background: #1151b0; color: #fff; font: 700 12px/17px Roboto, sans-serif; text-align: center; border-radius: 2px; }
.btn { height: 35px; border: 1px solid #ccc; border-radius: 5px; background: #fff; display: flex; align-items: center; justify-content: center; font-size: 14.500px; letter-spacing: .15px; white-space: nowrap; margin-top: -1px; }
.app { width: 90px; margin-left: 3px; } .learn { width: 130px; margin-left: 9px; }
.help { margin-left: 9px; } .c1 { margin-left: 9px; }
.avatar { margin-left: 11px; }
.user { margin-left: 5px; width: 82px; font-size: 14.700px; white-space: nowrap; }
.c2 { margin: 0 4px 0 7px; }

.main { flex: 1; display: flex; min-height: 0; }
.rail { width: 42px; flex: none; background: #fafafa; border-right: 1px solid #d8d8d8; border-top: 1px solid #e4e4e4; display: flex; flex-direction: column; align-items: center; padding: 8px 0 5px; gap: 15.200px; }
.content { flex: 1; display: flex; flex-direction: column; min-width: 0; }

.toolbar { height: 40px; flex: none; display: flex; align-items: center; padding-bottom: 1px; }
.undo { margin-left: 9px; } .redo { margin-left: 19px; transform: scaleX(-1); color: #888; }
.sep { width: 4.900px; height: 28px; border-left: 2px solid #dedede; flex: none; }
.sep.first { margin-left: 10px; }
.sep.second { width: 3px; }
.pen { margin-left: 7px; }
.sketch { width: 48px; margin-left: 5px; margin-right: 11px; font-size: 15px; }
.tool { width: 36.200px; flex: none; display: flex; justify-content: center; }
.tool svg { width: 20px; height: 20px; }
.tool.wide svg { width: 22px; height: 22px; }
.more { width: 18.500px; flex: none; padding-left: 2px; color: #444; }
.more svg { width: 12px; height: 12px; }
.search { width: 170px; height: 34px; margin-left: 11px; background: #eee; border-radius: 2px; display: flex; align-items: center; padding-left: 10px; font-size: 14.600px; }
.search span { width: 96px; white-space: nowrap; }
kbd { height: 19px; border: 1px solid #aaa; border-radius: 2px; font: 12px/17px Roboto, "DejaVu Sans", sans-serif; text-align: center; background: #f3f3f3; white-space: nowrap; }
.k1 { width: 36px; font-size: 11.500px; } .k2 { width: 17px; }

.work { flex: 1; display: flex; min-height: 0; }
.panel { width: 218px; flex: none; border-right: 1px solid #ccc; border-top: 1px solid #ccc; margin-top: -1px; }
.panel-head { height: 32px; display: flex; align-items: center; padding-left: 3px; }
.panel-head strong { width: 140px; font-size: 13.900px; }
.watch { margin-left: 12px; }
.filter { display: flex; align-items: center; height: 31px; padding-left: 10px; }
.field { margin-left: 13px; width: 168px; height: 32px; border: 1px solid #bbb; border-radius: 3px; font-style: italic; font-size: 13.800px; color: #aaa; line-height: 30px; padding-left: 5px; white-space: nowrap; }
.row { height: 27.650px; display: flex; align-items: center; padding-left: 5px; white-space: nowrap; font-size: 14px; }
.row .ic { width: 17px; height: 17px; margin-right: 4.500px; }
.row.off { color: #999; } .row.off .ic { opacity: .5; }
.row.group { padding-left: 3px; font-size: 13.900px; }
.tw { width: 14px; height: 14px; margin-right: 6px; color: #444; }
.nest { margin-left: 8px; border-left: 2px solid #ddd; }
.nest .row { padding-left: 15px; }
.rollback { width: 202px; height: 7px; background: #bfbfbf; margin: 10.500px 0 0 4px; }
.parts { border-top: 1px solid #ccc; width: 211px; margin-top: 33px; }
.parts .row { position: relative; top: -.5px; }
.row.sub { padding-left: 25px; }

.canvas { position: relative; flex: 1; min-width: 0; overflow: visible; }
.scene { overflow: hidden; }
.flyout { position: absolute; left: -1px; top: 486px; width: 35px; height: 35px; background: #fff; border: 1px solid #ccc; border-left: 0; display: flex; align-items: center; justify-content: center; }
.side { position: absolute; right: 0; top: 433px; width: 34px; border: 1px solid #ccc; border-right: 0; background: #fff; }
.side span { height: 34px; display: flex; align-items: center; justify-content: center; }
.side span + span { border-top: 1px solid #ccc; height: 35px; }

.tabs { height: 32px; flex: none; background: #d0d0d0; display: flex; border-bottom: 1px solid #eee; }
.plus { width: 40px; background: #cacaca; display: flex; align-items: center; justify-content: center; margin-right: 1px; padding-right: 5px; }
.tab { width: 213px; height: 29px; margin-right: 1.700px; background: #e8e8e8; border-radius: 0 0 4px 4px; display: flex; align-items: center; padding: 2px 0 0 12px; color: #555; font-size: 15px; white-space: nowrap; box-shadow: 0 1px 1px #aaa; }
.tab svg { width: 20px; height: 20px; margin-right: 3px; }
.tab.active { background: #fff; color: #222; font-size: 14.600px; border-bottom: 3px solid #1249a8; height: 30px; padding-top: 4px; }
```
